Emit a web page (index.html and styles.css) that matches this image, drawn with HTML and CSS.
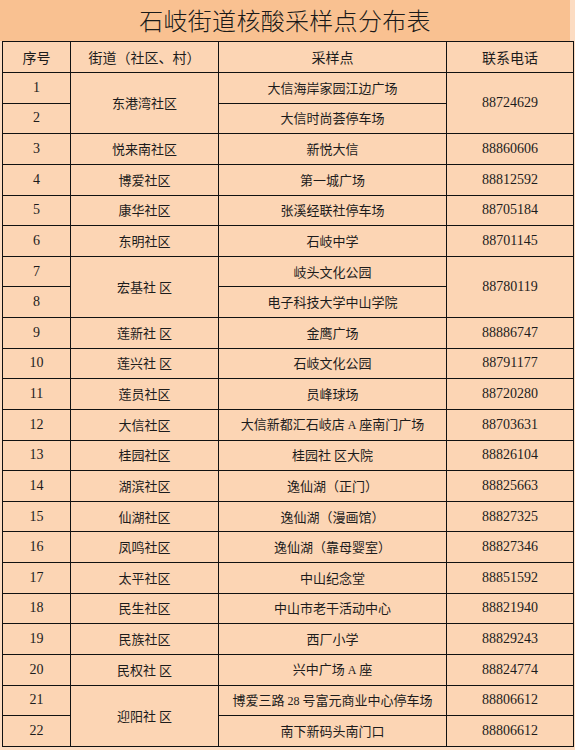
FILE: index.html
```html
<!DOCTYPE html>
<html lang="zh-CN">
<head>
<meta charset="utf-8">
<title>石岐街道核酸采样点分布表</title>
<link rel="stylesheet" href="styles.css">
</head>
<body>
<div class="page">
  <div class="title">石岐街道核酸采样点分布表</div>
  <table class="sheet">
    <colgroup>
      <col class="c1"><col class="c2"><col class="c3"><col class="c4">
    </colgroup>
    <thead>
      <tr class="head"><th>序号</th><th>街道（社区、村）</th><th>采样点</th><th>联系电话</th></tr>
    </thead>
    <tbody>
      <tr><td class="num">1</td><td rowspan="2">东港湾社区</td><td>大信海岸家园江边广场</td><td class="num" rowspan="2">88724629</td></tr>
      <tr><td class="num">2</td><td>大信时尚荟停车场</td></tr>
      <tr><td class="num">3</td><td>悦来南社区</td><td>新悦大信</td><td class="num">88860606</td></tr>
      <tr><td class="num">4</td><td>博爱社区</td><td>第一城广场</td><td class="num">88812592</td></tr>
      <tr><td class="num">5</td><td>康华社区</td><td>张溪经联社停车场</td><td class="num">88705184</td></tr>
      <tr><td class="num">6</td><td>东明社区</td><td>石岐中学</td><td class="num">88701145</td></tr>
      <tr><td class="num">7</td><td rowspan="2">宏基社 区</td><td>岐头文化公园</td><td class="num" rowspan="2">88780119</td></tr>
      <tr><td class="num">8</td><td>电子科技大学中山学院</td></tr>
      <tr><td class="num">9</td><td>莲新社 区</td><td>金鹰广场</td><td class="num">88886747</td></tr>
      <tr><td class="num">10</td><td>莲兴社 区</td><td>石岐文化公园</td><td class="num">88791177</td></tr>
      <tr><td class="num">11</td><td>莲员社区</td><td>员峰球场</td><td class="num">88720280</td></tr>
      <tr><td class="num">12</td><td>大信社区</td><td>大信新都汇石岐店 <span class="lat">A</span> 座南门广场</td><td class="num">88703631</td></tr>
      <tr><td class="num">13</td><td>桂园社区</td><td>桂园社 区大院</td><td class="num">88826104</td></tr>
      <tr><td class="num">14</td><td>湖滨社区</td><td>逸仙湖（正门）</td><td class="num">88825663</td></tr>
      <tr><td class="num">15</td><td>仙湖社区</td><td>逸仙湖（漫画馆）</td><td class="num">88827325</td></tr>
      <tr><td class="num">16</td><td>凤鸣社区</td><td>逸仙湖（靠母婴室）</td><td class="num">88827346</td></tr>
      <tr><td class="num">17</td><td>太平社区</td><td>中山纪念堂</td><td class="num">88851592</td></tr>
      <tr><td class="num">18</td><td>民生社区</td><td>中山市老干活动中心</td><td class="num">88821940</td></tr>
      <tr><td class="num">19</td><td>民族社区</td><td>西厂小学</td><td class="num">88829243</td></tr>
      <tr><td class="num">20</td><td>民权社 区</td><td>兴中广场 <span class="lat">A</span> 座</td><td class="num">88824774</td></tr>
      <tr><td class="num">21</td><td rowspan="2">迎阳社 区</td><td>博爱三路 <span class="lat">28</span> 号富元商业中心停车场</td><td class="num">88806612</td></tr>
      <tr><td class="num">22</td><td>南下新码头南门口</td><td class="num">88806612</td></tr>
    </tbody>
  </table>
</div>
</body>
</html>
```

FILE: styles.css
```css
html, body {
  margin: 0;
  padding: 0;
  background: #fcdcc2;
}
.page {
  width: 575px;
  height: 750px;
  overflow: hidden;
  font-family: "Noto Sans CJK SC", "Noto Sans", sans-serif;
  color: #1c1c1c;
}
.title {
  width: 570px;
  height: 41px;
  background: #f9c191;
  text-align: center;
  font-size: 24px;
  line-height: 40px;
  font-weight: 300;
  letter-spacing: 0.3px;
  color: #1a1a1a;
}
.sheet {
  margin-left: 2px;
  width: 571px;
  table-layout: fixed;
  border-collapse: collapse;
  background: #fcd5b4;
  border: 1.5px solid #111;
}
.c1 { width: 68px; }
.c2 { width: 148px; }
.c3 { width: 228px; }
.c4 { width: 127px; }
.sheet th,
.sheet td {
  border: 1.5px solid #111;
  padding: 0;
  text-align: center;
  vertical-align: middle;
  font-size: 13px;
  font-weight: 400;
  line-height: 16px;
}
.sheet th {
  font-size: 14px;
}
.head {
  height: 31px;
}
.sheet tbody tr {
  height: 30.64px;
}
.num {
  font-family: "Liberation Serif", "DejaVu Serif", serif;
  font-size: 14px !important;
}
.lat {
  font-family: "Liberation Serif", serif;
  font-size: 12px;
}
```
